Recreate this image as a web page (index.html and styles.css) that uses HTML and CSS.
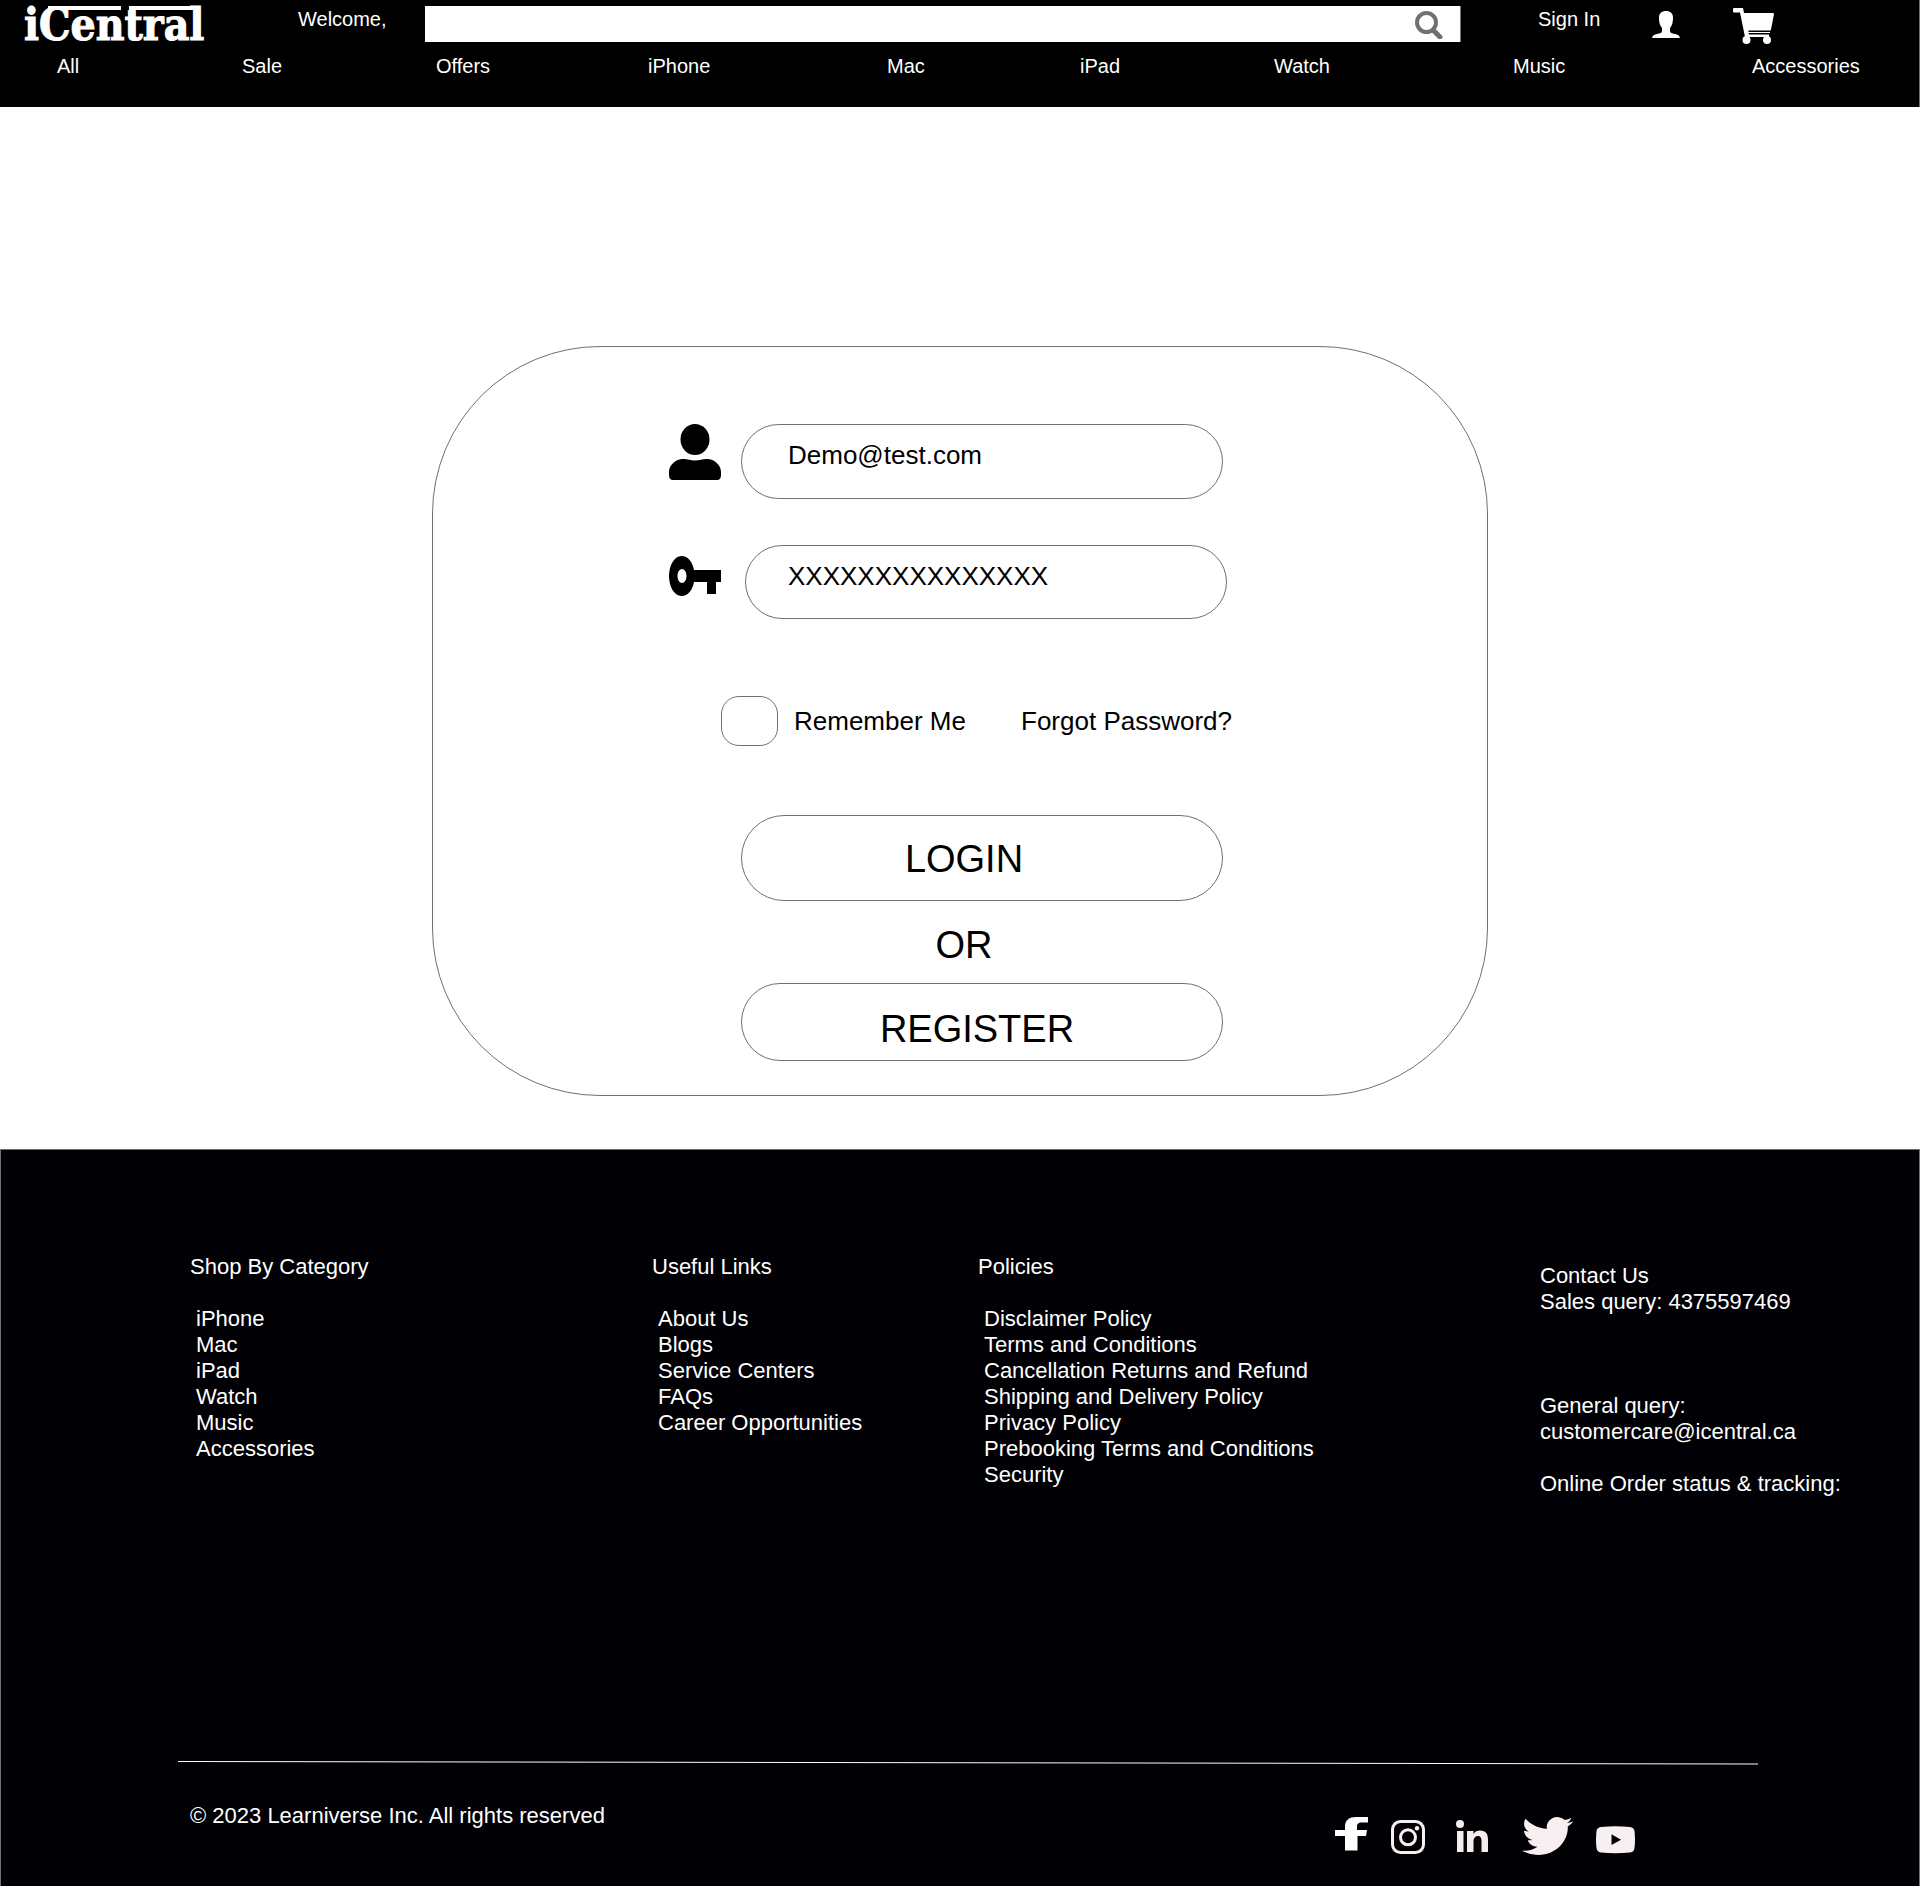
FILE: index.html
```html
<!DOCTYPE html>
<html lang="en">
<head>
<meta charset="utf-8">
<meta name="viewport" content="width=device-width, initial-scale=1">
<title>iCentral - Sign In</title>
<link rel="stylesheet" href="styles.css">
</head>
<body>
<header class="header">
  <div class="topbar">
    <a class="logo" href="#">iCentral</a>
    <span class="welcome">Welcome,</span>
    <form class="search" role="search">
      <input class="search-input" type="search" aria-label="Search">
      <button class="search-button" type="button" aria-label="Search">
        <svg width="28" height="28" viewBox="0 0 28 28"><circle cx="11.500" cy="11.500" r="9.500" fill="none" stroke="#707070" stroke-width="4"/><path d="M18.500 19.500L25 26" stroke="#707070" stroke-width="5" stroke-linecap="round"/></svg>
      </button>
    </form>
    <a class="signin" href="#">Sign In</a>
    <a class="account" href="#" aria-label="Account">
      <svg width="28" height="27" viewBox="0 0 28 27"><path fill="#fff" d="M14 0C18.500 0 21 2.500 21 6.500C21 11 20.500 14 18 17V20C18 22 20 22.500 23 23C26 23.500 27.500 24.500 28 27H0C.5 24.500 2 23.500 5 23C8 22.500 10 22 10 20V17C7.500 14 7 11 7 6.500C7 2.500 9.500 0 14 0Z"/></svg>
    </a>
    <a class="cart" href="#" aria-label="Cart">
      <svg width="41" height="36" viewBox="0 0 41 36" fill="#fff"><path d="M1 0H10L11 5H40Q41 5 41 6L38 21.500Q37.800 22.500 37 22.500H15.500V24H37V25H15.500L16 26.500H36V29H12L7 4.500H1Q0 4.500 0 3.500V1Q0 0 1 0Z"/><circle cx="13.500" cy="32" r="4"/><circle cx="34" cy="32" r="4"/></svg>
    </a>
  </div>
  <nav class="nav">
    <a href="#">All</a>
    <a href="#">Sale</a>
    <a href="#">Offers</a>
    <a href="#">iPhone</a>
    <a href="#">Mac</a>
    <a href="#">iPad</a>
    <a href="#">Watch</a>
    <a href="#">Music</a>
    <a href="#">Accessories</a>
  </nav>
</header>

<main class="main">
  <form class="card">
    <div class="field">
      <label for="email" aria-label="Email"><svg class="field-icon" width="52" height="56" viewBox="0 0 52 56"><ellipse cx="26" cy="15.500" rx="14.500" ry="15.500"/><path d="M13 35C18 34.500 21 36.500 26 36.500S34 34.500 39 35C47 36 52 42 52 48V51Q52 56 48 56H4Q0 56 0 51V48C0 42 5 36 13 35Z"/></svg></label>
      <input class="field-input" id="email" type="text" value="Demo@test.com">
    </div>
    <div class="field field-password">
      <label for="password" aria-label="Password"><svg class="field-icon key" width="52" height="40" viewBox="0 0 52 40"><path fill-rule="evenodd" d="M12.500 0C19 0 23.500 6 25 14H52V26H47V38H38V26H25C23.500 34 19 40 12.500 40C5.500 40 0 31 0 20S5.500 0 12.500 0ZM13 13C10.500 13 8.500 16 8.500 20S10.500 27 13 27S17.500 24 17.500 20S15.500 13 13 13Z"/></svg></label>
      <input class="field-input" id="password" type="text" value="XXXXXXXXXXXXXXX">
    </div>
    <div class="options">
      <label class="remember"><input class="checkbox" type="checkbox">Remember Me</label>
      <a href="#">Forgot Password?</a>
    </div>
    <div class="actions">
      <button class="button login" type="button">LOGIN</button>
      <p class="or">OR</p>
      <button class="button register" type="button">REGISTER</button>
    </div>
  </form>
</main>

<footer class="footer">
  <div class="columns">
    <section>
      <h2>Shop By Category</h2>
      <ul>
        <li><a href="#">iPhone</a></li>
        <li><a href="#">Mac</a></li>
        <li><a href="#">iPad</a></li>
        <li><a href="#">Watch</a></li>
        <li><a href="#">Music</a></li>
        <li><a href="#">Accessories</a></li>
      </ul>
    </section>
    <section>
      <h2>Useful Links</h2>
      <ul>
        <li><a href="#">About Us</a></li>
        <li><a href="#">Blogs</a></li>
        <li><a href="#">Service Centers</a></li>
        <li><a href="#">FAQs</a></li>
        <li><a href="#">Career Opportunities</a></li>
      </ul>
    </section>
    <section>
      <h2>Policies</h2>
      <ul>
        <li><a href="#">Disclaimer Policy</a></li>
        <li><a href="#">Terms and Conditions</a></li>
        <li><a href="#">Cancellation Returns and Refund</a></li>
        <li><a href="#">Shipping and Delivery Policy</a></li>
        <li><a href="#">Privacy Policy</a></li>
        <li><a href="#">Prebooking Terms and Conditions</a></li>
        <li><a href="#">Security</a></li>
      </ul>
    </section>
    <section class="contact">
      <h2>Contact Us</h2>
      <p class="sales">Sales query: 4375597469</p>
      <p class="general">General query:<br><a href="#">customercare@icentral.ca</a></p>
      <p>Online Order status &amp; tracking:</p>
    </section>
  </div>
  <svg class="rule" viewBox="0 0 1580 4" preserveAspectRatio="none" aria-hidden="true"><path d="M0 .5L1580 3" stroke="#fff" stroke-width="1"/></svg>
  <div class="bottom">
    <p>© 2023 Learniverse Inc. All rights reserved</p>
    <div class="social">
      <a href="#" aria-label="Facebook"><svg width="33" height="38" viewBox="0 0 33 38"><path fill="#fff" d="M10 33.500V19H0V13H10V10C10 3 14 0 21 0H33V5.500H27C23 5.500 22 7 22 10V13H32L31 19H22.500V33.500Z"/></svg></a>
      <a href="#" aria-label="Instagram"><svg width="42" height="38" viewBox="0 0 42 38" fill="none" stroke="#f8f0f0" stroke-width="3"><rect x="1.500" y="4.500" width="31" height="31" rx="8"/><circle cx="17" cy="20.300" r="7.500"/><circle cx="26" cy="11.300" r="2.200" fill="#f8f0f0" stroke="none"/></svg></a>
      <a href="#" aria-label="LinkedIn"><svg width="43" height="38" viewBox="0 0 43 38" fill="#f4ecec"><circle cx="4" cy="7" r="4"/><path d="M1 14H7.500V35H1ZM11 14H17.500V17C19 14.500 21 13.500 24 13.500C30 13.500 32 17 32 23V35H25.500V24C25.500 21 24.500 19 22 19S17.500 21 17.500 24V35H11Z"/></svg></a>
      <a href="#" aria-label="Twitter"><svg width="51" height="38" viewBox="0 2.200 24 19.600" preserveAspectRatio="none"><path fill="#f8f0f0" d="M23.953 4.570a10 10 0 01-2.825.775 4.958 4.958 0 002.163-2.723c-.951.555-2.005.959-3.127 1.184a4.920 4.920 0 00-8.384 4.482C7.690 8.095 4.067 6.130 1.640 3.162a4.822 4.822 0 00-.666 2.475c0 1.710.870 3.213 2.188 4.096a4.904 4.904 0 01-2.228-.616v.060a4.923 4.923 0 003.946 4.827 4.996 4.996 0 01-2.212.085 4.936 4.936 0 004.604 3.417 9.867 9.867 0 01-6.102 2.105c-.390 0-.779-.023-1.170-.067a13.995 13.995 0 007.557 2.209c9.053 0 13.998-7.496 13.998-13.985 0-.210 0-.420-.015-.630A9.935 9.935 0 0024 4.590z"/></svg></a>
      <a href="#" aria-label="YouTube"><svg width="39" height="38" viewBox="0 0 39 38"><path fill="#f8f0f0" fill-rule="evenodd" d="M5 10Q19.500 8.500 34 10Q38 10.500 38.500 14Q39.500 23 38.500 31Q38 35 34 35.500Q19.500 37 5 35.500Q1 35 .5 31Q-.5 23 .5 14Q1 10.500 5 10ZM15.500 17.300V28L25 22.700Z"/></svg></a>
    </div>
  </div>
</footer>
</body>
</html>
```

FILE: styles.css
```css
* {
  box-sizing: border-box;
}

body {
  margin: 0;
  background: #fff;
  color: #000;
  font-family: "Liberation Sans", Arial, Helvetica, sans-serif;
}

a {
  color: inherit;
  text-decoration: none;
}

h2,
p,
ul {
  margin: 0;
  padding: 0;
  font-size: inherit;
  font-weight: normal;
  list-style: none;
}

input,
button {
  margin: 0;
  color: inherit;
  font-family: inherit;
}

svg {
  display: block;
}

/* Header */

.header {
  background: #000;
  color: #fff;
  font-size: 20px;
  line-height: 24px;
  border-right: 1px solid #707070;
  padding-bottom: 29px;
}

.topbar {
  display: grid;
  grid-template-columns: 274fr 127fr 1113fr 114fr 81fr 163fr;
  align-items: start;
  height: 54px;
  padding: 6px 23px 0 24px;
}

.logo {
  position: relative;
  justify-self: start;
  font-family: "DejaVu Serif Condensed", "DejaVu Serif", serif;
  font-stretch: condensed;
  font-weight: bold;
  font-size: 44px;
  line-height: 38px;
  -webkit-text-stroke: 1px #fff;
}

/* Split bar that joins the top of the C to the top of the l */
.logo::before {
  content: "";
  position: absolute;
  top: 0;
  left: 24px;
  right: 4px;
  height: 4px;
  background: linear-gradient(90deg, #fff 48%, #000 48%, #000 53%, #fff 53%);
}

.welcome,
.signin {
  padding-top: 1px;
}

.search {
  display: flex;
  height: 36px;
  margin-right: 77px;
  background: #fff;
  border-right: 1px solid #707070;
}

.search-input {
  flex: 1;
  min-width: 0;
  padding: 0 12px;
  border: 0;
  background: none;
  color: #000;
  font-size: 20px;
}

.search-button {
  padding: 5px 17px 3px 0;
  border: 0;
  background: none;
}

.account {
  padding-top: 5px;
}

.cart {
  padding-top: 2px;
}

.nav {
  display: grid;
  grid-template-columns: 185fr 194fr 212fr 239fr 193fr 194fr 239fr 239fr 167fr;
  padding-left: 57px;
}

/* Sign-in card */

.main {
  padding: 239px 16px 53px;
}

.card {
  width: 56%;
  max-width: 1056px;
  min-width: 820px;
  margin: 0 auto;
  padding: 77px 0 34px 236px;
  border: 1px solid #707070;
  border-radius: 168px;
  font-size: 26px;
  line-height: 30px;
}

.field {
  display: flex;
  gap: 20px;
}

.field-password {
  gap: 24px;
  margin-top: 46px;
}

.key {
  margin-top: 11px;
}

.field-input {
  width: 482px;
  height: 75px;
  padding: 0 46px 12px;
  border: 1px solid #707070;
  border-radius: 38px;
  background: #fff;
  font-size: 26px;
}

.field-password .field-input {
  height: 74px;
  padding-left: 42px;
}

.options {
  display: flex;
  justify-content: space-between;
  align-items: center;
  width: 511px;
  margin: 77px 0 0 52px;
}

.remember {
  display: flex;
  align-items: center;
  gap: 16px;
}

.checkbox {
  appearance: none;
  width: 57px;
  height: 50px;
  border: 1px solid #707070;
  border-radius: 18px;
}

.checkbox:checked {
  background: #707070;
}

.actions {
  display: flex;
  flex-direction: column;
  width: 482px;
  margin: 69px 0 0 72px;
  font-size: 38px;
  line-height: 44px;
  text-align: center;
}

.button {
  border: 1px solid #707070;
  border-radius: 43px;
  background: #fff;
  font-size: 38px;
  line-height: 44px;
}

.login {
  height: 86px;
  padding: 2px 36px 0 0;
}

.or {
  padding: 22px 36px 16px 0;
}

.register {
  height: 78px;
  padding: 14px 10px 0 0;
}

/* Footer */

.footer {
  padding: 104px 0 31px;
  border: 1px solid #707070;
  border-bottom: 0;
  background: #000005;
  color: #fff;
  font-size: 22px;
  line-height: 26px;
}

.columns {
  display: grid;
  grid-template-columns: 462fr 326fr 562fr 379fr;
  padding-left: 189px;
}

.columns ul {
  padding: 26px 0 0 6px;
}

.contact {
  padding-top: 9px;
}

.sales {
  margin-bottom: 78px;
}

.general {
  margin-bottom: 26px;
}

.rule {
  width: calc(100% - 338px);
  height: 4px;
  margin: 264px 161px 0 177px;
}

.bottom {
  display: flex;
  justify-content: space-between;
  padding: 38px 284px 0 189px;
}

.social {
  display: flex;
  gap: 23px;
  padding-top: 14px;
}
```
